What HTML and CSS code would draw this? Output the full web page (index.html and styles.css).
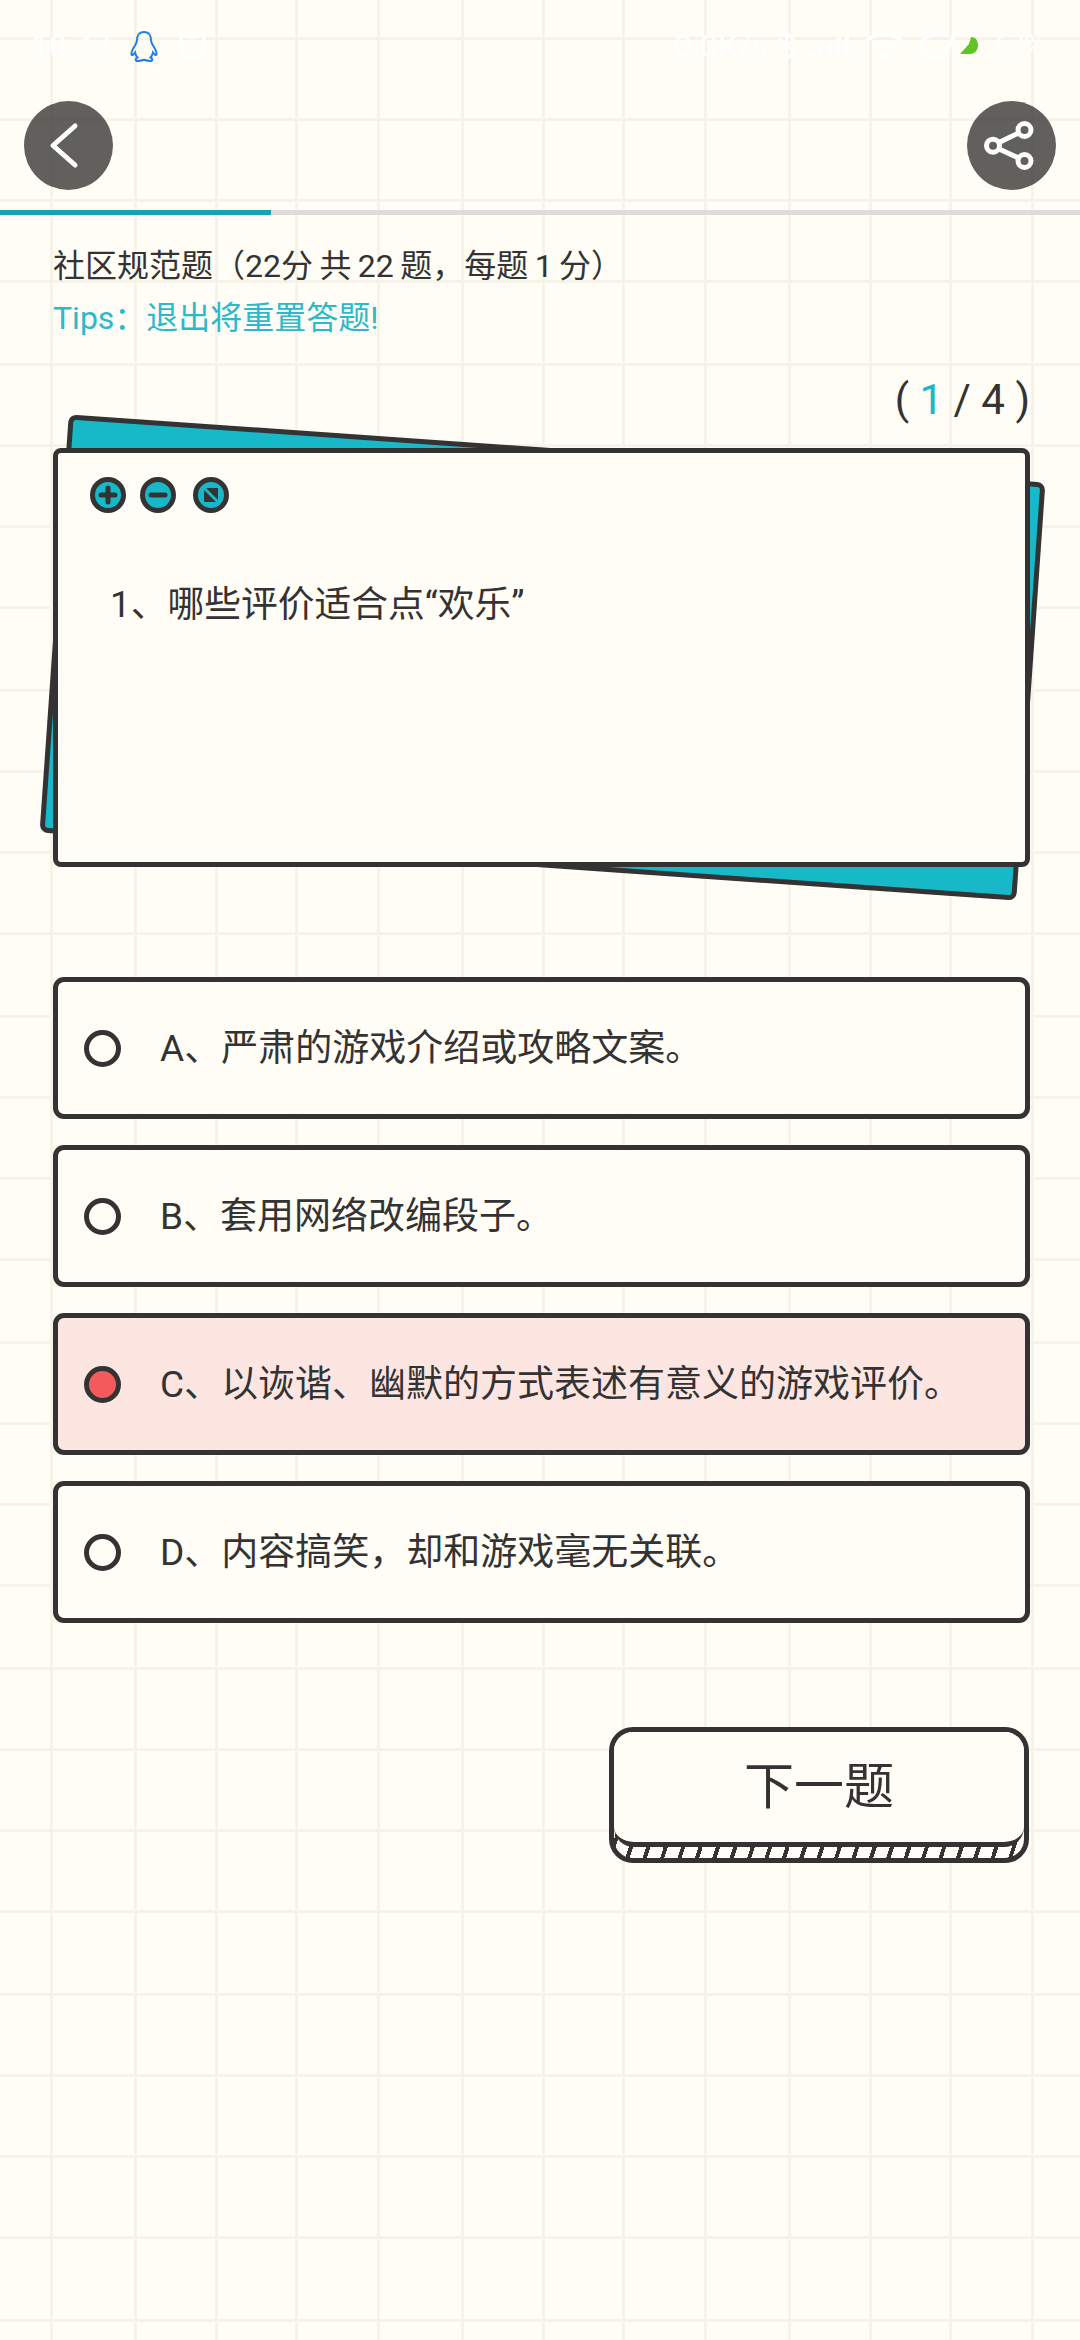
FILE: index.html
```html
<!DOCTYPE html>
<html lang="zh-CN">
<head>
    <meta charset="UTF-8">
    <meta name="viewport" content="width=device-width, initial-scale=1.0">
    <title>社区规范题</title>
    <link rel="stylesheet" href="styles.css">
</head>
<body>
    <div class="status-bar">
        <div class="status-left">
            <span class="status-time">10:47</span>
            <svg class="icon-qq" width="28" height="31" viewBox="0 0 28 31">
                <path d="M14 1C8.5 1 7 5.500 7 9C7 11 6.500 12 5 14.500C3 17.500 1 21 1.500 23.500C2 25 4 23 5 21.500C5.500 24 6.500 25.500 7.500 26.500C5 27.500 5 30 8 30C10.500 30 12 29.500 14 28.800C16 29.500 17.500 30 20 30C23 30 23 27.500 20.500 26.500C21.500 25.500 22.500 24 23 21.500C24 23 26 25 26.500 23.500C27 21 25 17.500 23 14.500C21.500 12 21 11 21 9C21 5.500 19.500 1 14 1Z"/>
            </svg>
            <svg class="icon-shield" width="27" height="30" viewBox="0 0 27 30">
                <path d="M2 3C5 5 9 5 13.500 6C18 5 22 5 25 3V15C25 22 20 27 13.500 28C7 27 2 22 2 15Z"/>
            </svg>
        </div>
        <div class="status-right">
            <span class="status-speed">0.0K/s</span>
            <svg class="icon-bluetooth" width="22" height="32" viewBox="0 0 22 32">
                <path d="M3 9L18 22L11 29V3L18 10L3 23"/>
            </svg>
            <svg class="icon-signal" width="40" height="24" viewBox="0 0 40 24">
                <rect x="0" y="19" width="5" height="5"/>
                <rect x="9" y="14" width="5" height="10"/>
                <rect x="18" y="9" width="5" height="15"/>
                <rect x="27" y="4" width="5" height="20"/>
                <rect x="36" y="0" width="4" height="24"/>
            </svg>
            <svg class="icon-wifi" width="40" height="28" viewBox="0 0 40 28">
                <path d="M2 9C12 0 28 0 38 9"/>
                <path d="M9 16C15 10 25 10 31 16"/>
                <circle cx="20" cy="24" r="3"/>
            </svg>
            <svg class="icon-battery" width="60" height="30" viewBox="0 0 60 30">
                <path class="battery-arc" d="M20 3C10 3 2 8 2 15C2 22 10 27 20 27"/>
                <path class="battery-arc" d="M36 3L24 27"/>
                <path class="battery-pie" d="M52 6C57 6 59 10 59 14C59 19 56 23 51 23H41L50 13Z"/>
            </svg>
            <span class="status-battery">67%</span>
        </div>
    </div>

    <div class="nav">
        <div class="nav-btn">
            <svg width="89" height="89" viewBox="0 0 89 89">
                <path d="M51 25L29 44.500L51 64"/>
            </svg>
        </div>
        <div class="nav-btn">
            <svg width="89" height="89" viewBox="0 0 89 89">
                <path d="M32 41.500L51.500 32"/>
                <path d="M32 48L51.500 57"/>
                <circle cx="57.500" cy="29" r="6.500"/>
                <circle cx="26" cy="44.700" r="6.500"/>
                <circle cx="57.500" cy="60" r="6.500"/>
            </svg>
        </div>
    </div>

    <div class="progress">
        <div class="progress-fill"></div>
    </div>

    <div class="intro">
        <div class="intro-title">社区规范题（22分 共 22 题，每题 1 分）</div>
        <div class="intro-tips">Tips：退出将重置答题!</div>
    </div>

    <div class="counter">( <span class="counter-current">1</span> / 4 )</div>

    <div class="card">
        <div class="card-dots">
            <svg class="dot" width="36" height="36" viewBox="0 0 36 36">
                <circle cx="18" cy="18" r="15.500"/>
                <path d="M18 11V25M11 18H25"/>
            </svg>
            <svg class="dot" width="36" height="36" viewBox="0 0 36 36">
                <circle cx="18" cy="18" r="15.500"/>
                <path d="M11 18H25"/>
            </svg>
            <svg class="dot dot-expand" width="36" height="36" viewBox="0 0 36 36">
                <circle cx="18" cy="18" r="15.500"/>
                <path class="dot-arrow" d="M11 13V25H23Z"/>
                <path class="dot-arrow" d="M13 11H25V23Z"/>
            </svg>
        </div>
        <div class="card-question">1、哪些评价适合点“欢乐”</div>
    </div>

    <div class="options">
        <div class="option">
            <span class="radio"></span>
            <span class="option-text">A、严肃的游戏介绍或攻略文案。</span>
        </div>
        <div class="option">
            <span class="radio"></span>
            <span class="option-text">B、套用网络改编段子。</span>
        </div>
        <div class="option option-selected">
            <span class="radio"></span>
            <span class="option-text">C、以诙谐、幽默的方式表述有意义的游戏评价。</span>
        </div>
        <div class="option">
            <span class="radio"></span>
            <span class="option-text">D、内容搞笑，却和游戏毫无关联。</span>
        </div>
    </div>

    <div class="next-btn">
        <div class="next-face">下一题</div>
    </div>
</body>
</html>
```

FILE: styles.css
```css
* {
    box-sizing: border-box;
}
html, body {
    margin: 0;
    padding: 0;
}
body {
    width: 1080px;
    height: 2340px;
    overflow: hidden;
    font-family: Roboto, "Noto Sans CJK SC", sans-serif;
    color: #333;
    background-color: #fffdf5;
    /* squared paper */
    background-image:
        linear-gradient(90deg,
            transparent 50px, #f6f3e9 50px, #f6f3e9 53px, transparent 53px,
            transparent 134px, #f6f3e9 134px, #f6f3e9 137px, transparent 137px,
            transparent 215px, #f6f3e9 215px, #f6f3e9 218px, transparent 218px,
            transparent 295px, #f6f3e9 295px, #f6f3e9 298px, transparent 298px),
        linear-gradient(180deg,
            transparent 37px, #f6f3e9 37px, #f6f3e9 40px, transparent 40px,
            transparent 118px, #f6f3e9 118px, #f6f3e9 121px, transparent 121px,
            transparent 199px, #f6f3e9 199px, #f6f3e9 202px, transparent 202px,
            transparent 280px, #f6f3e9 280px, #f6f3e9 283px, transparent 283px);
    background-size: 327px 326px;
}

/* status bar */
.status-bar {
    height: 92px;
    display: flex;
    align-items: center;
    justify-content: space-between;
    color: #fff;
}
.status-left {
    display: flex;
    align-items: center;
    padding-left: 31px;
}
.status-time {
    font-size: 32px;
    width: 99px;
}
.icon-qq {
    fill: none;
    stroke: #2080e8;
    stroke-width: 2;
}
.icon-shield {
    margin-left: 21px;
    fill: none;
    stroke: #fff;
    stroke-width: 4;
}
.status-right {
    display: flex;
    align-items: center;
    padding-right: 36px;
}
.status-speed {
    font-size: 32px;
}
.icon-bluetooth {
    margin-left: 8px;
    fill: none;
    stroke: #fff;
    stroke-width: 2.500;
}
.icon-signal {
    margin-left: 11px;
    fill: #fff;
}
.icon-wifi {
    margin-left: 15px;
    fill: none;
    stroke: #fff;
    stroke-width: 4;
}
.icon-wifi circle {
    fill: #fff;
    stroke: none;
}
.icon-battery {
    margin-left: 15px;
}
.battery-arc {
    fill: none;
    stroke: #fff;
    stroke-width: 4;
}
.battery-pie {
    fill: #5fc520;
}
.status-battery {
    margin-left: 15px;
    font-size: 27px;
}

/* nav */
.nav {
    margin-top: 9px;
    padding: 0 24px;
    display: flex;
    justify-content: space-between;
}
.nav-btn {
    width: 89px;
    height: 89px;
    border-radius: 50%;
    background: rgba(0, 0, 0, 0.62);
}
.nav-btn svg {
    display: block;
    fill: none;
    stroke: #fff;
    stroke-width: 5;
    stroke-linecap: round;
    stroke-linejoin: round;
}

.progress {
    margin-top: 20px;
    height: 5px;
    background: #dcdcdc;
}
.progress-fill {
    width: 271px;
    height: 5px;
    background: #17a2b0;
}

.intro {
    margin-top: 25px;
    padding-left: 53px;
    font-size: 32px;
    line-height: 52px;
}
.intro-title {
    word-spacing: -1.500px;
}
.intro-tips {
    color: #2bb9cb;
}

.counter {
    margin-top: 31px;
    padding-right: 50px;
    text-align: right;
    font-size: 42px;
    line-height: 50px;
}
.counter-current {
    color: #17b8c8;
}

/* question card */
.card {
    position: relative;
    width: 977px;
    height: 419px;
    margin: 23px 0 0 53px;
    padding: 24px 0 0 32px;
    border: 5px solid #333;
    border-radius: 8px;
    background: #fffdf5;
}
.card::before {
    content: "";
    box-sizing: border-box;
    position: absolute;
    top: -5px;
    left: -5px;
    width: 979px;
    height: 419px;
    border: 5px solid #333;
    border-radius: 8px;
    background: #17b8c8;
    transform: rotate(4deg);
    z-index: -1;
}
.card-dots {
    display: flex;
    align-items: center;
}
.dot {
    display: block;
    margin-right: 14px;
    fill: #17b8c8;
    stroke: #333;
    stroke-width: 5;
}
.dot path {
    fill: none;
    stroke-width: 5;
    stroke-linecap: round;
}
.dot-expand .dot-arrow {
    fill: #333;
    stroke: none;
}
.dot + .dot-expand {
    margin-left: 3px;
}
.card-question {
    margin-top: 66px;
    padding-left: 20px;
    font-size: 36.750px;
    line-height: 52px;
}

/* options */
.options {
    display: flex;
    flex-direction: column;
    gap: 26px;
    width: 977px;
    margin: 110px 0 0 53px;
}
.option {
    height: 142px;
    display: flex;
    align-items: center;
    padding-left: 26px;
    border: 5px solid #333;
    border-radius: 11px;
    background: #fffdf5;
}
.option-selected {
    background: #fde6e1;
}
.radio {
    width: 37px;
    height: 37px;
    margin-right: 39px;
    border: 5px solid #333;
    border-radius: 50%;
    background: #fffdf5;
}
.option-selected .radio {
    background: #f25a5c;
}
.option-text {
    margin-bottom: 6px;
    font-size: 37px;
}

/* next button */
.next-btn {
    width: 420px;
    height: 136px;
    margin: 104px 0 0 609px;
    border: 5px solid #333;
    border-radius: 24px;
    overflow: hidden;
    background: repeating-linear-gradient(108deg, #333 0, #333 4px, #fffdf5 4px, #fffdf5 16.550px);
}
.next-face {
    height: 115px;
    padding-bottom: 10px;
    display: flex;
    align-items: center;
    justify-content: center;
    font-size: 50px;
    background: #fffdf5;
    border-bottom: 5px solid #333;
    border-radius: 0 0 20px 20px;
}
```
